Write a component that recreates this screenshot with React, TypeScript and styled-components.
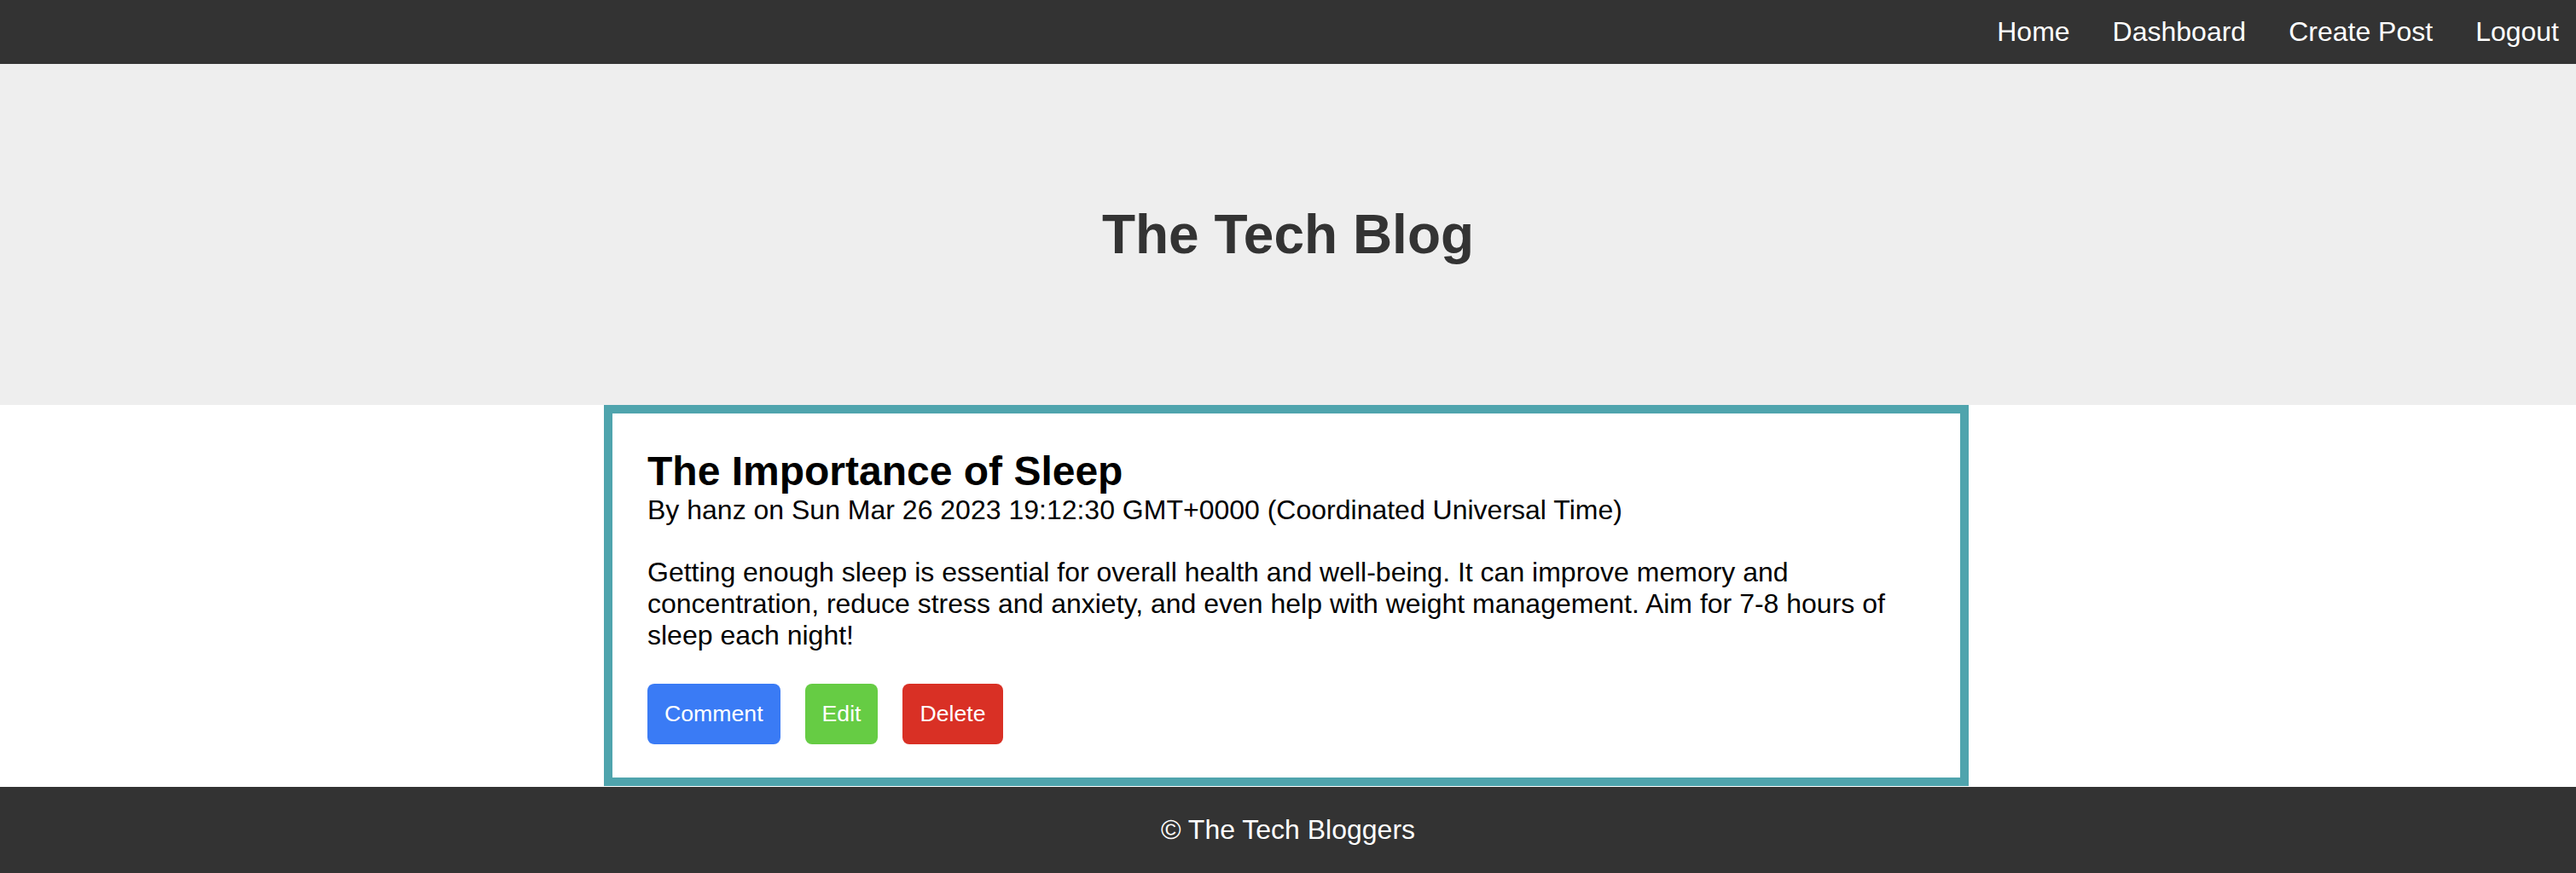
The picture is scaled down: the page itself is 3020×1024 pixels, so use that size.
import React from "react";
import styled, { createGlobalStyle } from "styled-components";

const GlobalStyle = createGlobalStyle`
  html, body {
    margin: 0;
    padding: 0;
    background: #ffffff;
    font-family: "Liberation Sans", Arial, Helvetica, sans-serif;
    font-size: 32px;
    color: #000000;
  }
  * { box-sizing: border-box; }
`;

const Page = styled.div`
  display: flex;
  flex-direction: column;
  min-height: 100vh;
`;

const NavBar = styled.nav`
  height: 75px;
  background: #333333;
  display: flex;
  justify-content: flex-end;
  align-items: center;
  gap: 50px;
  padding-right: 20px;
`;

const NavLink = styled.a`
  color: #ffffff;
  text-decoration: none;
  font-size: 32px;
  line-height: normal;
`;

const Hero = styled.header`
  height: 400px;
  background: #eeeeee;
  display: flex;
  align-items: center;
  justify-content: center;
`;

const SiteTitle = styled.h1`
  margin: 0;
  font-size: 64px;
  font-weight: 700;
  color: #333333;
  line-height: normal;
`;

const Main = styled.main`
  flex: 1;
`;

const PostCard = styled.article`
  width: 1600px;
  margin: 0 0 0 calc(50% - 802px);
  border: 10px solid #4fa4ad;
  padding: 40px 40px 39px 41px;
  background: #ffffff;
`;

const PostTitle = styled.h2`
  margin: 0;
  font-size: 48px;
  font-weight: 700;
  line-height: normal;
`;

const Byline = styled.div`
  font-size: 32px;
  line-height: normal;
`;

const Body = styled.p`
  margin: 36px 0 38px;
  font-size: 32px;
  line-height: normal;
`;

const Actions = styled.div`
  display: flex;
  gap: 29px;
`;

const ActionButton = styled.button<{ $bg: string }>`
  background: ${(p) => p.$bg};
  color: #ffffff;
  border: none;
  border-radius: 8px;
  padding: 20px;
  font-family: "Liberation Sans", Arial, Helvetica, sans-serif;
  font-size: 26.67px;
  line-height: normal;
  cursor: pointer;
`;

const Footer = styled.footer`
  background: #333333;
  color: #ffffff;
  text-align: center;
  padding: 32px 0;
  font-size: 32px;
  line-height: normal;
`;

export default function App() {
  return (
    <>
      <GlobalStyle />
      <Page>
        <NavBar>
          <NavLink href="#">Home</NavLink>
          <NavLink href="#">Dashboard</NavLink>
          <NavLink href="#">Create Post</NavLink>
          <NavLink href="#">Logout</NavLink>
        </NavBar>
        <Hero>
          <SiteTitle>The Tech Blog</SiteTitle>
        </Hero>
        <Main>
          <PostCard>
            <PostTitle>The Importance of Sleep</PostTitle>
            <Byline>
              By hanz on Sun Mar 26 2023 19:12:30 GMT+0000 (Coordinated Universal Time)
            </Byline>
            <Body>
              Getting enough sleep is essential for overall health and well-being. It can improve
              memory and concentration, reduce stress and anxiety, and even help with weight
              management. Aim for 7-8 hours of sleep each night!
            </Body>
            <Actions>
              <ActionButton $bg="#3a7bf5">Comment</ActionButton>
              <ActionButton $bg="#66cc44">Edit</ActionButton>
              <ActionButton $bg="#d93025">Delete</ActionButton>
            </Actions>
          </PostCard>
        </Main>
        <Footer>© The Tech Bloggers</Footer>
      </Page>
    </>
  );
}
